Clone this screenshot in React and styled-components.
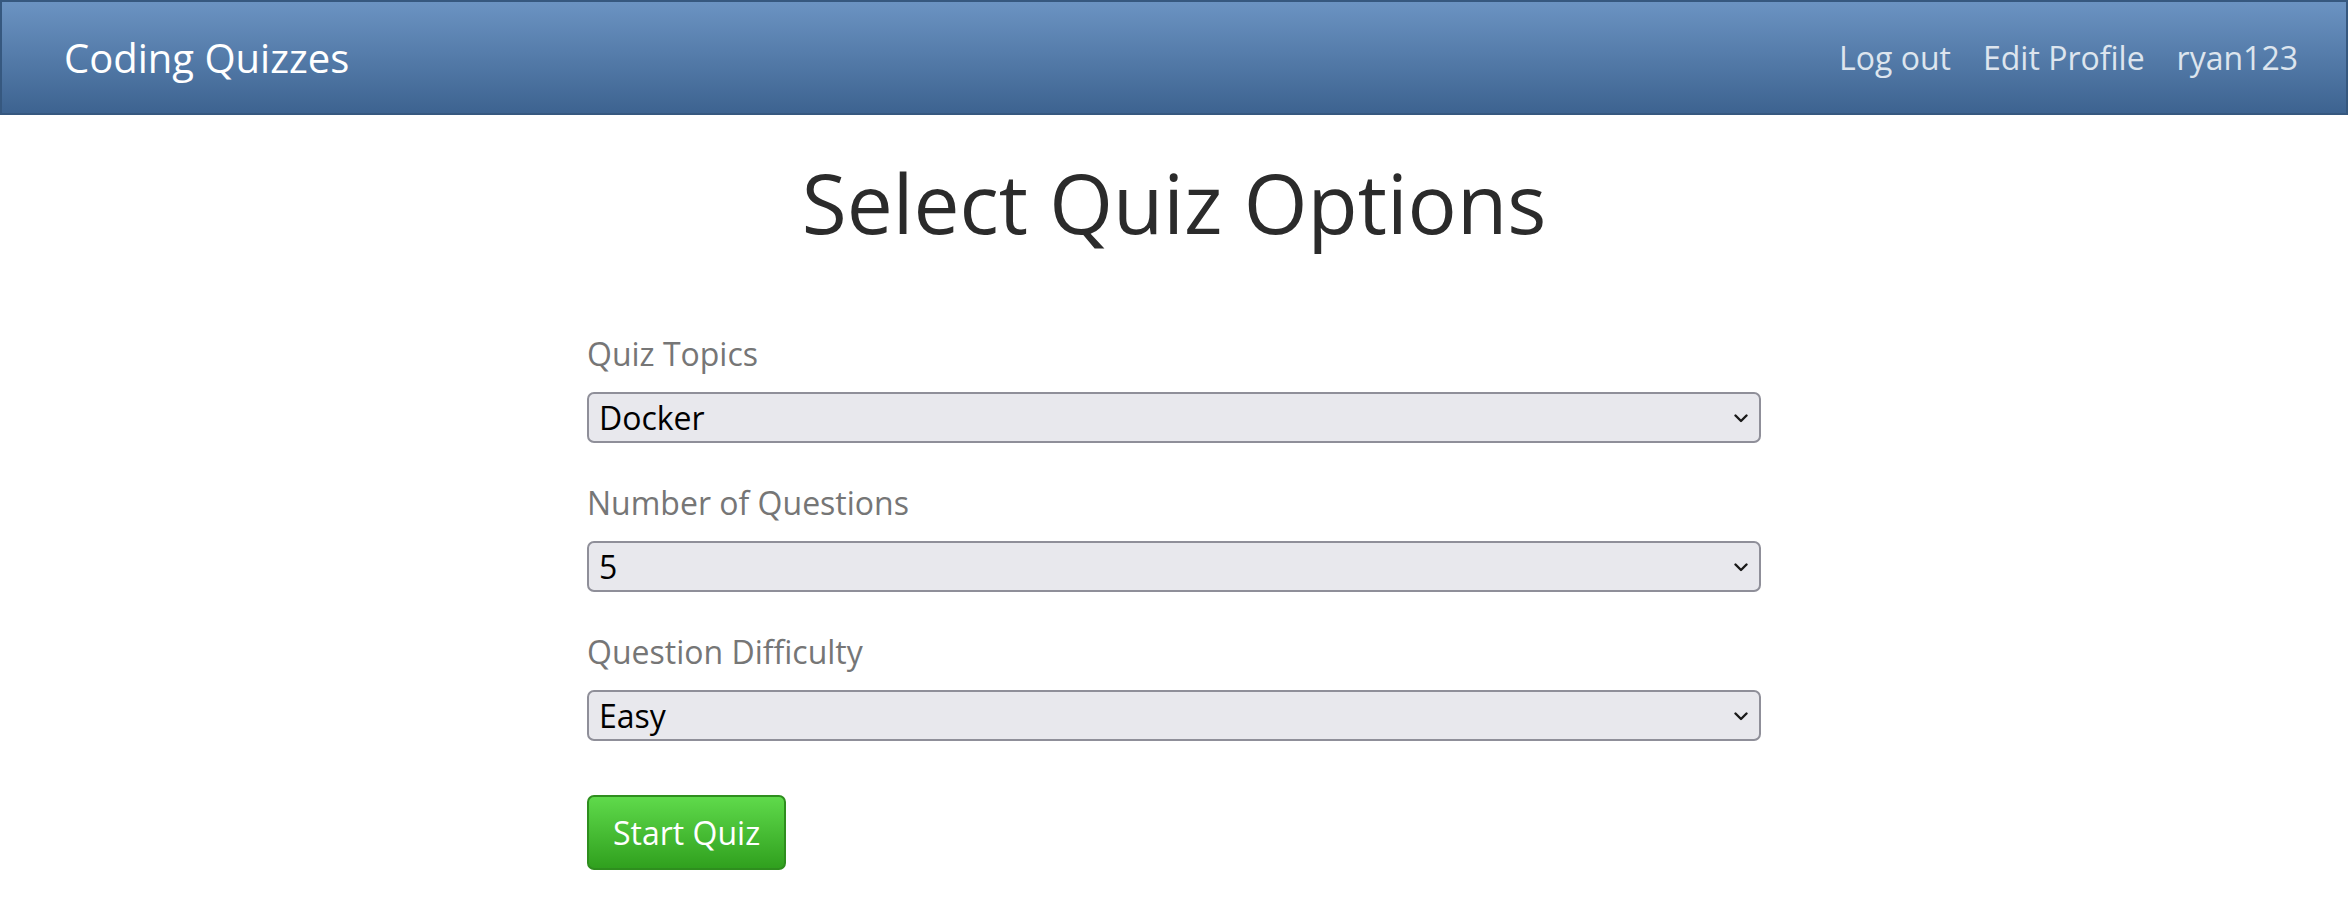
import { createGlobalStyle, styled } from 'styled-components';

const GlobalStyle = createGlobalStyle`
    body {
        margin: 0;
        background: #ffffff;
        font-family: "Open Sans", "Noto Sans", sans-serif;
    }
`;

const NavBar = styled.nav`
    box-sizing: border-box;
    height: 115px;
    display: flex;
    align-items: center;
    justify-content: space-between;
    padding: 0 48px 0 62px;
    background: linear-gradient(#6b93c2, #3d6390);
    border: 2px solid #36587f;
`;

const Brand = styled.a`
    font-size: 40px;
    color: #ffffff;
    text-decoration: none;
`;

const NavLinks = styled.div`
    display: flex;
    gap: 32px;
`;

const NavLink = styled.a`
    font-size: 32px;
    color: #dde5ee;
    text-decoration: none;
`;

const Title = styled.h1`
    margin: 31px 0 74px;
    text-align: center;
    font-size: 82px;
    font-weight: 400;
    color: #2b2b2b;
`;

const Form = styled.form`
    width: 50%;
    margin: 0 auto;
`;

const Field = styled.div`
    margin-bottom: 38px;
`;

const Label = styled.label`
    display: block;
    font-size: 32px;
    line-height: 44px;
    color: #767676;
    margin-bottom: 16px;
`;

const SelectWrap = styled.div`
    position: relative;
`;

const Select = styled.select`
    box-sizing: border-box;
    width: 100%;
    height: 51px;
    padding: 0 40px 0 10px;
    appearance: none;
    background: #e8e8ed;
    border: 2px solid #8f8f99;
    border-radius: 7px;
    font-family: inherit;
    font-size: 32px;
    color: #000000;
`;

const Chevron = styled.svg`
    position: absolute;
    right: 13px;
    top: 50%;
    width: 14px;
    height: 9px;
    margin-top: -4px;
    pointer-events: none;
`;

const StartButton = styled.button`
    margin-top: 16px;
    height: 75px;
    padding: 0 24px;
    border: 2px solid #2e8e1e;
    border-radius: 7px;
    background: linear-gradient(#5fda4b, #30a01e);
    color: #ffffff;
    font-family: inherit;
    font-size: 32px;
    cursor: pointer;
`;

function SelectField({ id, label, options }) {
    return (
        <Field>
            <Label htmlFor={id}>{label}</Label>
            <SelectWrap>
                <Select id={id} defaultValue={options[0]}>
                    {options.map((opt) => (
                        <option key={opt}>{opt}</option>
                    ))}
                </Select>
                <Chevron viewBox="0 0 14 9">
                    <path
                        d="M1.5 1.5 L7 7 L12.5 1.5"
                        fill="none"
                        stroke="#1a1a1a"
                        strokeWidth="2.4"
                        strokeLinecap="round"
                        strokeLinejoin="round"
                    />
                </Chevron>
            </SelectWrap>
        </Field>
    );
}

export default function App() {
    return (
        <>
            <GlobalStyle />
            <NavBar>
                <Brand href="#">Coding Quizzes</Brand>
                <NavLinks>
                    <NavLink href="#">Log out</NavLink>
                    <NavLink href="#">Edit Profile</NavLink>
                    <NavLink href="#">ryan123</NavLink>
                </NavLinks>
            </NavBar>
            <Title>Select Quiz Options</Title>
            <Form onSubmit={(e) => e.preventDefault()}>
                <SelectField
                    id="topic"
                    label="Quiz Topics"
                    options={['Docker', 'JavaScript', 'Python', 'Linux']}
                />
                <SelectField
                    id="count"
                    label="Number of Questions"
                    options={['5', '10', '15', '20']}
                />
                <SelectField
                    id="difficulty"
                    label="Question Difficulty"
                    options={['Easy', 'Medium', 'Hard']}
                />
                <StartButton type="submit">Start Quiz</StartButton>
            </Form>
        </>
    );
}
